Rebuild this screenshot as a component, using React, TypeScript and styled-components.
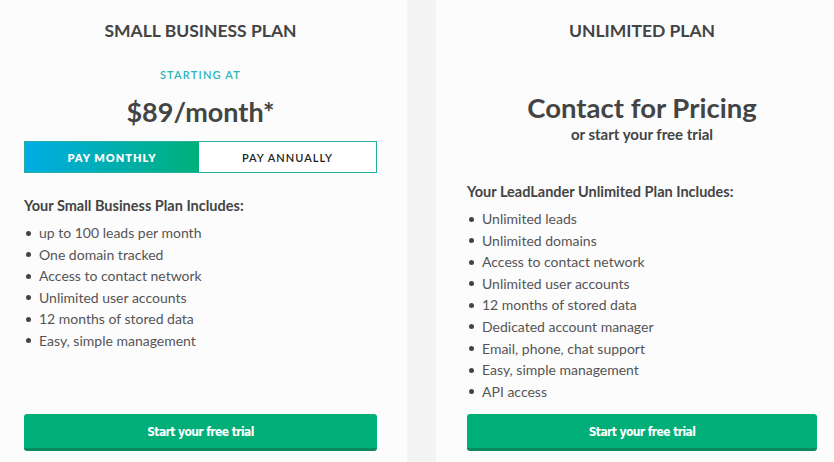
import React from "react";
import styled, { createGlobalStyle } from "styled-components";

const GlobalStyle = createGlobalStyle`
  html, body {
    margin: 0;
    padding: 0;
    background: #f4f4f4;
    overflow: hidden;
  }
  * {
    box-sizing: border-box;
  }
`;

const Page = styled.div`
  display: flex;
  gap: 29px;
  width: 834px;
  height: 462px;
  font-family: "Lato", "Open Sans", sans-serif;
  color: #444;
`;

const Card = styled.div<{ $pad: string }>`
  display: flex;
  flex-direction: column;
  flex: 0 0 auto;
  width: ${(p) => (p.$pad === "left" ? "407px" : "398px")};
  height: 462px;
  padding: ${(p) => (p.$pad === "left" ? "20px 30px 11px 24px" : "20px 17px 11px 31px")};
  background: #fcfcfd;
`;

const PlanTitle = styled.h2`
  margin: 0;
  font-size: 17.5px;
  line-height: 22px;
  font-weight: 700;
  letter-spacing: 0;
  text-align: center;
  color: #444;
`;

const StartingAt = styled.div`
  margin-top: 26px;
  font-size: 11px;
  line-height: 14px;
  font-weight: 600;
  letter-spacing: 1.2px;
  text-align: center;
  color: #2bb3b8;
`;

const Price = styled.div`
  margin-top: 13px;
  font-size: 27px;
  line-height: 34px;
  font-weight: 700;
  text-align: center;
  color: #444;
`;

const Toggle = styled.div`
  margin-top: 12px;
  display: grid;
  grid-template-columns: 174px 1fr;
  height: 32px;
  border: 1px solid #27ae9c;
  background: #fff;
`;

const ToggleOption = styled.div<{ $active?: boolean }>`
  display: flex;
  align-items: center;
  justify-content: center;
  font-size: 11px;
  letter-spacing: 1px;
  font-weight: ${(p) => (p.$active ? 800 : 600)};
  color: ${(p) => (p.$active ? "#fff" : "#222")};
  background: ${(p) =>
    p.$active ? "linear-gradient(90deg, #00ade6 0%, #00b07a 100%)" : "#fff"};
`;

const Contact = styled.div`
  margin-top: 50px;
  font-size: 27.5px;
  line-height: 32px;
  font-weight: 700;
  text-align: center;
  color: #444;
`;

const SubContact = styled.div`
  font-size: 15px;
  line-height: 20px;
  font-weight: 700;
  text-align: center;
  color: #444;
`;

const IncludesTitle = styled.div<{ $top: number }>`
  margin-top: ${(p) => p.$top}px;
  font-size: 14.5px;
  line-height: 20px;
  font-weight: 700;
  color: #444;
`;

const FeatureList = styled.ul`
  margin: 6px 0 0;
  padding: 0;
  list-style: none;
`;

const Feature = styled.li`
  position: relative;
  padding-left: 15px;
  font-size: 14px;
  line-height: 21.6px;
  color: #555;

  &::before {
    content: "";
    position: absolute;
    left: 1.5px;
    top: 8.5px;
    width: 5px;
    height: 5px;
    border-radius: 50%;
    background: #444;
  }
`;

const TrialButton = styled.button`
  margin-top: auto;
  width: 100%;
  height: 37px;
  padding-top: 2px;
  border: none;
  border-bottom: 3px solid #0b8a5f;
  border-radius: 3px;
  background: #00ae78;
  color: #fff;
  font-family: "DejaVu Sans Condensed", "Liberation Sans", sans-serif;
  font-weight: 700;
  font-size: 12px;
  letter-spacing: -0.6px;
  cursor: pointer;
`;

const smallFeatures = [
  "up to 100 leads per month",
  "One domain tracked",
  "Access to contact network",
  "Unlimited user accounts",
  "12 months of stored data",
  "Easy, simple management",
];

const unlimitedFeatures = [
  "Unlimited leads",
  "Unlimited domains",
  "Access to contact network",
  "Unlimited user accounts",
  "12 months of stored data",
  "Dedicated account manager",
  "Email, phone, chat support",
  "Easy, simple management",
  "API access",
];

export default function App() {
  return (
    <>
      <GlobalStyle />
      <Page>
        <Card $pad="left">
          <PlanTitle>SMALL BUSINESS PLAN</PlanTitle>
          <StartingAt>STARTING AT</StartingAt>
          <Price>$89/month*</Price>
          <Toggle>
            <ToggleOption $active>PAY MONTHLY</ToggleOption>
            <ToggleOption>PAY ANNUALLY</ToggleOption>
          </Toggle>
          <IncludesTitle $top={23}>Your Small Business Plan Includes:</IncludesTitle>
          <FeatureList>
            {smallFeatures.map((f) => (
              <Feature key={f}>{f}</Feature>
            ))}
          </FeatureList>
          <TrialButton>Start your free trial</TrialButton>
        </Card>
        <Card $pad="right">
          <PlanTitle>UNLIMITED PLAN</PlanTitle>
          <Contact>Contact for Pricing</Contact>
          <SubContact>or start your free trial</SubContact>
          <IncludesTitle $top={38}>Your LeadLander Unlimited Plan Includes:</IncludesTitle>
          <FeatureList>
            {unlimitedFeatures.map((f) => (
              <Feature key={f}>{f}</Feature>
            ))}
          </FeatureList>
          <TrialButton>Start your free trial</TrialButton>
        </Card>
      </Page>
    </>
  );
}
